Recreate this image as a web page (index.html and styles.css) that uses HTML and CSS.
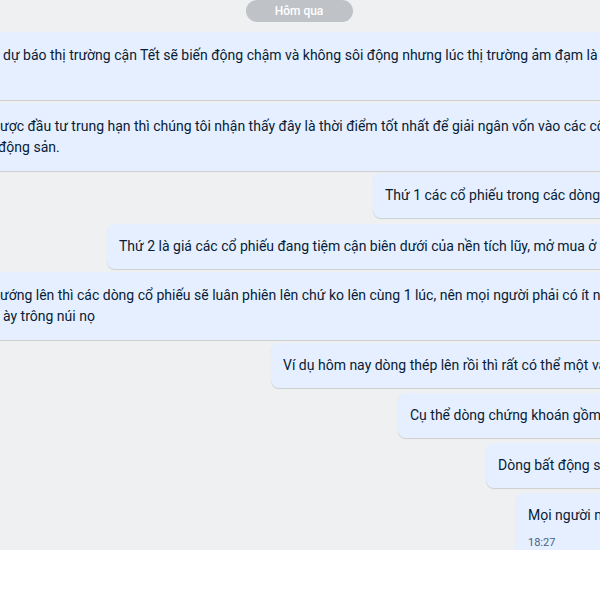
FILE: index.html
```html
<!DOCTYPE html>
<html lang="vi">
<head>
<meta charset="utf-8">
<link rel="stylesheet" href="styles.css">
</head>
<body>
<div class="chat">
  <div class="divider"><span class="pill">Hôm qua</span></div>
  <div class="msg left l1"><span class="line">dự báo thị trường cận Tết sẽ biến động chậm và không sôi động nhưng lúc thị trường ảm đạm là lúc</span><span class="line">&nbsp;</span></div>
  <div class="msg left l2"><span class="line shift">ược đầu tư trung hạn thì chúng tôi nhận thấy đây là thời điểm tốt nhất để giải ngân vốn vào các cổ phiếu</span><span class="line shift">động sản.</span></div>
  <div class="msg right r3">Thứ 1 các cổ phiếu trong các dòng ngành</div>
  <div class="msg right r4">Thứ 2 là giá các cổ phiếu đang tiệm cận biên dưới của nền tích lũy, mở mua ở vùng giá</div>
  <div class="msg left l5"><span class="line shift">ướng lên thì các dòng cổ phiếu sẽ luân phiên lên chứ ko lên cùng 1 lúc, nên mọi người phải có ít nhất</span><span class="line">ày trông núi nọ</span></div>
  <div class="msg right r6">Ví dụ hôm nay dòng thép lên rồi thì rất có thể một vài</div>
  <div class="msg right r7">Cụ thể dòng chứng khoán gồm</div>
  <div class="msg right r8">Dòng bất động sản</div>
  <div class="msg right r9">Mọi người nên<span class="time">18:27</span></div>
</div>
<div class="footer"></div>
</body>
</html>
```
FILE: styles.css
```css
html, body {
  margin: 0;
  padding: 0;
  background: #ffffff;
}
body {
  width: 600px;
  height: 600px;
  overflow: hidden;
  font-family: Roboto, "Noto Sans", sans-serif;
}
.chat {
  height: 550px;
  background: #eef0f1;
  overflow: hidden;
  display: flex;
  flex-direction: column;
  align-items: flex-start;
}
.divider {
  align-self: stretch;
  display: flex;
  justify-content: center;
}
.pill {
  margin-left: -2px;
  width: 107px;
  height: 22px;
  line-height: 22px;
  text-align: center;
  border-radius: 11px;
  background: #bfc3c7;
  color: #ffffff;
  font-size: 12px;
  font-weight: 500;
}
.msg {
  flex: none;
  white-space: nowrap;
  background: #e5efff;
  color: #081c36;
  font-size: 14px;
  line-height: 21px;
  padding: 12px 12px;
  border-radius: 8px;
  box-shadow: 0 1px 1px rgba(0, 0, 0, 0.14);
}
.left {
  width: 700px;
  margin-left: -9px;
  padding-top: 13px;
  padding-bottom: 13px;
}
.line {
  display: block;
}
.shift { margin-left: -3px; }
.l2 .line + .line { margin-left: -5px; }
.l1 { margin-top: 10px; }
.l2 { margin-top: 3px; }
.r3 { margin-left: 373px; margin-top: 2px; }
.r4 { margin-left: 107px; margin-top: 6px; }
.l5 { margin-top: 3px; }
.r6 { margin-left: 271px; margin-top: 3px; }
.r7 { margin-left: 398px; margin-top: 5px; }
.r8 { margin-left: 486px; margin-top: 5px; }
.r9 { margin-left: 516px; margin-top: 5px; padding-bottom: 8px; }
.time {
  display: block;
  margin-top: 10px;
  font-size: 11px;
  line-height: 14px;
  color: #476285;
}
.footer {
  height: 50px;
  background: #ffffff;
}
```
